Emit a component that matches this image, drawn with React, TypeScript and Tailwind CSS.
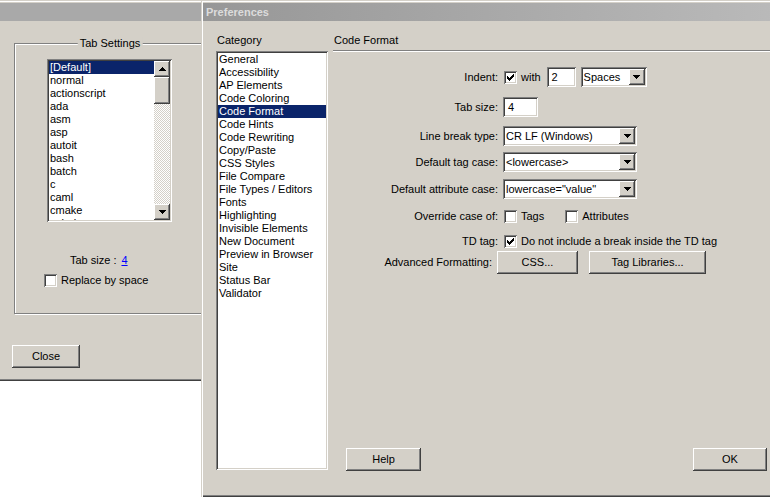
const sunken =
  "shadow-[inset_1px_1px_0_#808080,inset_-1px_-1px_0_#ffffff,inset_2px_2px_0_#404040,inset_-2px_-2px_0_#d4d0c8]";
const raised =
  "shadow-[inset_-1px_-1px_0_#404040,inset_1px_1px_0_#ffffff,inset_-2px_-2px_0_#808080,inset_2px_2px_0_#d4d0c8]";

const languages = [
  "[Default]",
  "normal",
  "actionscript",
  "ada",
  "asm",
  "asp",
  "autoit",
  "bash",
  "batch",
  "c",
  "caml",
  "cmake",
  "cobol",
];

const categories = [
  "General",
  "Accessibility",
  "AP Elements",
  "Code Coloring",
  "Code Format",
  "Code Hints",
  "Code Rewriting",
  "Copy/Paste",
  "CSS Styles",
  "File Compare",
  "File Types / Editors",
  "Fonts",
  "Highlighting",
  "Invisible Elements",
  "New Document",
  "Preview in Browser",
  "Site",
  "Status Bar",
  "Validator",
];

function Arrow({ up }: { up?: boolean }) {
  return (
    <svg width="7" height="4" viewBox="0 0 7 4" shapeRendering="crispEdges" className={up ? "rotate-180" : ""}>
      <path d="M0 0h7v1H0zM1 1h5v1H1zM2 2h3v1H2zM3 3h1v1H3z" fill="#000" />
    </svg>
  );
}

function Checkbox({ checked, className = "" }: { checked?: boolean; className?: string }) {
  return (
    <div className={`w-[13px] h-[13px] shrink-0 bg-white ${sunken} ${className}`}>
      {checked && (
        <svg width="13" height="13" viewBox="0 0 13 13" shapeRendering="crispEdges">
          <path d="M3 5h1v1h1v1h1V6h1V5h1V4h1V3h1v3H9v1H8v1H7v1H6v1H5V9H4V8H3z" fill="#000" />
        </svg>
      )}
    </div>
  );
}

function TextField({ value, className = "" }: { value: string; className?: string }) {
  return (
    <div className={`h-[20px] shrink-0 bg-white ${sunken} flex items-center pl-[5px] ${className}`}>{value}</div>
  );
}

function Select({ value, className = "" }: { value: string; className?: string }) {
  return (
    <div className={`h-[20px] shrink-0 bg-white ${sunken} flex items-center p-[2px] ${className}`}>
      <span className="flex-1 pl-[1px] whitespace-nowrap overflow-hidden">{value}</span>
      <div className={`w-[16px] h-full bg-[#d4d0c8] ${raised} flex items-center justify-center`}>
        <Arrow />
      </div>
    </div>
  );
}

function Button({ children, className = "" }: { children: React.ReactNode; className?: string }) {
  return (
    <div className={`h-[23px] shrink-0 bg-[#d4d0c8] ${raised} flex items-center justify-center ${className}`}>
      {children}
    </div>
  );
}

function Label({ children, className = "w-[165px]" }: { children: React.ReactNode; className?: string }) {
  return <span className={`shrink-0 text-right whitespace-nowrap ${className}`}>{children}</span>;
}

function TabSettingsWindow() {
  return (
    <div className="absolute left-0 top-0 w-[216px] h-[381px] bg-[#d4d0c8] pt-[3px] flex flex-col shadow-[inset_0_1px_0_#d4d0c8,inset_0_2px_0_#ffffff,inset_0_-1px_0_#404040,inset_0_-2px_0_#808080]">
      <div className="h-[18px] bg-[#a9a9a9]" />

      {/* Tab Settings group */}
      <div className="relative mt-[22px] ml-[14px] w-[192px] h-[271px] border border-[#808080] shadow-[inset_1px_1px_0_#ffffff,1px_1px_0_#ffffff] pt-[15px] flex flex-col">
        <span className="absolute left-1/2 -translate-x-1/2 top-[-7px] bg-[#d4d0c8] px-[2px] whitespace-nowrap">
          Tab Settings
        </span>

        <div className={`ml-[32px] w-[125px] h-[163px] bg-white ${sunken} p-[2px] flex`}>
          <div className="flex-1 overflow-hidden">
            {languages.map((l, i) => (
              <div
                key={l}
                className={`h-[13px] pl-[1px] whitespace-nowrap ${i === 0 ? "bg-[#0a246a] text-white" : ""}`}
              >
                {l}
              </div>
            ))}
          </div>
          <div className="w-[16px] flex flex-col">
            <div className={`h-[16px] bg-[#d4d0c8] ${raised} flex items-center justify-center`}>
              <Arrow up />
            </div>
            <div className={`h-[27px] bg-[#d4d0c8] ${raised}`} />
            <div className="flex-1 bg-[repeating-conic-gradient(#ffffff_0_25%,#d4d0c8_0_50%)] bg-[length:2px_2px]" />
            <div className={`h-[16px] bg-[#d4d0c8] ${raised} flex items-center justify-center`}>
              <Arrow />
            </div>
          </div>
        </div>

        <div className="mt-[32px] ml-[55px] h-[13px] flex gap-[5px]">
          <span>Tab size :</span>
          <span className="text-[#0000ff] underline">4</span>
        </div>

        <div className="mt-[7px] ml-[29px] h-[13px] flex items-center gap-[4px]">
          <Checkbox />
          <span>Replace by space</span>
        </div>
      </div>

      <Button className="mt-[31px] ml-[12px] w-[68px]">Close</Button>
    </div>
  );
}

function PreferencesWindow() {
  return (
    <div className="absolute left-[201px] top-0 w-[580px] h-[497px] bg-[#d4d0c8] pt-[3px] pl-[2px] pb-[2px] flex flex-col shadow-[inset_1px_1px_0_#d4d0c8,inset_2px_2px_0_#ffffff,inset_0_-1px_0_#404040,inset_0_-2px_0_#808080]">
      <div className="h-[18px] bg-gradient-to-r from-[#979797] to-[#bababa] pl-[3px] flex items-center font-bold text-[#dcdcdc]">
        Preferences
      </div>

      <div className="flex-1 flex pt-[13px] pb-[24px] pl-[13px] pr-[6px]">
        {/* Category column */}
        <div className="w-[112px] flex flex-col">
          <div className="h-[13px] pl-[1px]">Category</div>
          <div className={`mt-[4px] h-[419px] bg-white ${sunken} p-[2px]`}>
            {categories.map((c) => (
              <div
                key={c}
                className={`h-[13px] pl-[1px] whitespace-nowrap ${c === "Code Format" ? "bg-[#0a246a] text-white" : ""}`}
              >
                {c}
              </div>
            ))}
          </div>
        </div>

        {/* Code Format panel */}
        <div className="flex-1 ml-[5px] flex flex-col">
          <div className="h-[13px] pl-[1px]">Code Format</div>
          <div className="mt-[3px] h-[2px] border-t border-b border-t-[#808080] border-b-white" />

          <div className="mt-[15px] h-[20px] flex items-center">
            <Label>Indent:</Label>
            <Checkbox checked className="ml-[6px]" />
            <span className="ml-[4px]">with</span>
            <TextField value="2" className="ml-[6px] w-[29px]" />
            <Select value="Spaces" className="ml-[5px] w-[66px]" />
          </div>

          <div className="mt-[10px] h-[20px] flex items-center">
            <Label>Tab size:</Label>
            <TextField value="4" className="ml-[5px] w-[35px]" />
          </div>

          <div className="mt-[9px] h-[20px] flex items-center">
            <Label>Line break type:</Label>
            <Select value="CR LF (Windows)" className="ml-[5px] w-[134px]" />
          </div>

          <div className="mt-[6px] h-[20px] flex items-center">
            <Label>Default tag case:</Label>
            <Select value="<lowercase>" className="ml-[5px] w-[134px]" />
          </div>

          <div className="mt-[7px] h-[20px] flex items-center">
            <Label>Default attribute case:</Label>
            <Select value='lowercase="value"' className="ml-[5px] w-[134px]" />
          </div>

          <div className="mt-[7px] h-[20px] flex items-center">
            <Label>Override case of:</Label>
            <Checkbox className="ml-[6px]" />
            <span className="ml-[4px]">Tags</span>
            <Checkbox className="ml-[21px]" />
            <span className="ml-[4px]">Attributes</span>
          </div>

          <div className="mt-[5px] h-[20px] flex items-center">
            <Label>TD tag:</Label>
            <Checkbox checked className="ml-[6px]" />
            <span className="ml-[4px] whitespace-nowrap">Do not include a break inside the TD tag</span>
          </div>

          <div className="h-[23px] flex items-center">
            <Label className="w-[159px]">Advanced Formatting:</Label>
            <Button className="ml-[5px] w-[81px]">CSS...</Button>
            <Button className="ml-[11px] w-[117px]">Tag Libraries...</Button>
          </div>

          <div className="mt-auto flex justify-between pl-[13px] pr-[8px]">
            <Button className="w-[75px]">Help</Button>
            <Button className="w-[74px]">OK</Button>
          </div>
        </div>
      </div>
    </div>
  );
}

export default function App() {
  return (
    <div className="relative w-[770px] h-[499px] overflow-hidden bg-white font-['Liberation_Sans',Arial,sans-serif] text-[11px] leading-[13px] text-black">
      <TabSettingsWindow />
      <PreferencesWindow />
    </div>
  );
}
